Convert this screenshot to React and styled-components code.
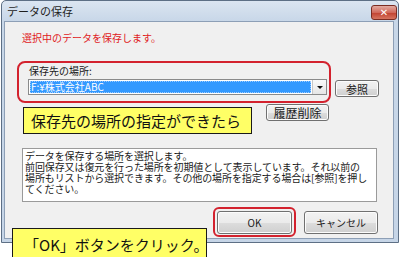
import React from 'react';
import styled, { createGlobalStyle } from 'styled-components';

const GlobalStyle = createGlobalStyle`
  html, body {
    margin: 0;
    padding: 0;
    background: #ffffff;
  }
  body {
    font-family: "Noto Sans CJK JP", "Liberation Sans", sans-serif;
  }
`;

const Page = styled.div`
  position: relative;
  width: 400px;
  height: 257px;
  overflow: hidden;
  background: #ffffff;
`;

const Window = styled.div`
  margin-left: 1px;
  width: 396px;
  height: 241px;
  border: 1px solid #5d6f85;
  border-radius: 5px 5px 0 0;
  background: linear-gradient(#dbe5f1, #c8d7e8 20px, #c6d5e7);
  display: flex;
  flex-direction: column;
`;

const TitleBar = styled.div`
  height: 19px;
  display: flex;
  align-items: center;
  justify-content: space-between;
  padding: 0 1px 0 5px;
  font-size: 11px;
  color: #1e1e1e;
`;

const CloseButton = styled.div`
  width: 24px;
  height: 13px;
  margin-top: 4px;
  border: 1px solid #7b2c22;
  border-radius: 3px;
  background: linear-gradient(#e2aba2, #d1695b 50%, #c0402f 51%, #d6745f);
  display: flex;
  align-items: center;
  justify-content: center;
  color: #ffffff;
  font-family: "DejaVu Sans", sans-serif;
  font-weight: bold;
  font-size: 10px;
  line-height: 1;
`;

const Body = styled.div`
  flex: 1;
  margin: 1px 4px 3px 2px;
  border: 1px solid #8d9fb6;
  background: #f0f0f0;
  padding: 9px 0 0 12px;
  display: flex;
  flex-direction: column;
`;

const Message = styled.div`
  margin-left: 5px;
  font-size: 10px;
  line-height: 14px;
  color: #e0201c;
`;

const TopRow = styled.div`
  display: flex;
  align-items: flex-start;
  gap: 4px;
  margin-top: 16px;
`;

const Ring = styled.div`
  border: 2px solid #d3222e;
  border-radius: ${p => p.$radius || 8}px;
  padding: ${p => p.$pad};
  width: ${p => p.$width};
  box-sizing: border-box;
`;

const Label = styled.div`
  font-size: 10px;
  line-height: 12px;
  color: #1a1a1a;
  margin-left: 1px;
  margin-bottom: 2px;
`;

const Combo = styled.div`
  height: 14px;
  border: 1px solid #8a8a8a;
  background: #ffffff;
  display: flex;
`;

const ComboValue = styled.div`
  flex: 1;
  margin: 1px;
  background: #3399ff;
  outline: 1px dotted #9bcaff;
  outline-offset: -1px;
  color: #ffffff;
  font-size: 10px;
  line-height: 12px;
  padding-left: 1px;
`;

const ComboArrow = styled.div`
  width: 13px;
  border-left: 1px solid #c8c8c8;
  background: linear-gradient(#fafafa, #e6e6e6);
  display: flex;
  align-items: center;
  justify-content: center;

  &::after {
    content: '';
    border-left: 3px solid transparent;
    border-right: 3px solid transparent;
    border-top: 3px solid #111;
  }
`;

const Button = styled.div`
  width: ${p => p.$w}px;
  height: ${p => p.$h}px;
  margin-top: ${p => p.$mt || 0}px;
  box-sizing: border-box;
  border: 1px solid #707070;
  border-radius: 3px;
  background: linear-gradient(#f2f2f2, #ebebeb 50%, #dddddd 51%, #cfcfcf);
  box-shadow: inset 0 0 0 1px #fcfcfc;
  display: flex;
  align-items: center;
  justify-content: center;
  font-size: ${p => p.$fs || 10}px;
  color: #1a1a1a;
`;

const HistoryRow = styled.div`
  width: 314px;
  display: flex;
  justify-content: flex-end;
  padding-right: 2px;
  box-sizing: border-box;
  margin-top: 1px;
`;

const Description = styled.div`
  margin: 27px 0 0 5px;
  width: 355px;
  height: 54px;
  box-sizing: border-box;
  border: 1px solid #9a9a9a;
  background: #ffffff;
  padding: 1px 2px;
  font-size: 10px;
  line-height: 11px;
  letter-spacing: -0.1px;
  color: #1a1a1a;
  white-space: pre-line;
  overflow: hidden;
`;

const Footer = styled.div`
  display: flex;
  align-items: flex-start;
  gap: 8px;
  margin: 5px 0 0 196px;
`;

const Callout = styled.div`
  position: absolute;
  left: ${p => p.$x}px;
  top: ${p => p.$y}px;
  width: ${p => p.$w}px;
  height: ${p => p.$h}px;
  box-sizing: border-box;
  border: 1px solid #1a1a1a;
  background: #ffff66;
  padding-left: ${p => p.$pl}px;
  display: flex;
  align-items: center;
  font-size: 15px;
  color: #111;
  white-space: nowrap;
`;

const description = 'データを保存する場所を選択します。\n前回保存又は復元を行った場所を初期値として表示しています。それ以前の\n場所もリストから選択できます。その他の場所を指定する場合は[参照]を押し\nてください。';

export default function App() {
  return (
    <Page>
      <GlobalStyle />
      <Window>
        <TitleBar>
          <span>データの保存</span>
          <CloseButton>✕</CloseButton>
        </TitleBar>
        <Body>
          <Message>選択中のデータを保存します。</Message>
          <TopRow>
            <Ring $width="314px" $pad="2px 2px 6px 9px">
              <Label>保存先の場所:</Label>
              <Combo>
                <ComboValue>F:¥株式会社ABC</ComboValue>
                <ComboArrow />
              </Combo>
            </Ring>
            <Button $w={44} $h={17} $mt={19} $fs={11}>参照</Button>
          </TopRow>
          <HistoryRow>
            <Button $w={63} $h={17} $fs={12}>履歴削除</Button>
          </HistoryRow>
          <Description>{description}</Description>
          <Footer>
            <Ring $radius={6} $pad="2px 2px 1px 2px">
              <Button $w={75} $h={23}>OK</Button>
            </Ring>
            <Button $w={74} $h={23} $mt={4}>キャンセル</Button>
          </Footer>
        </Body>
      </Window>
      <Callout $x={23} $y={107} $w={229} $h={27} $pl={7}>保存先の場所の指定ができたら</Callout>
      <Callout $x={12} $y={228} $w={195} $h={32} $pl={11}>「OK」ボタンをクリック。</Callout>
    </Page>
  );
}
